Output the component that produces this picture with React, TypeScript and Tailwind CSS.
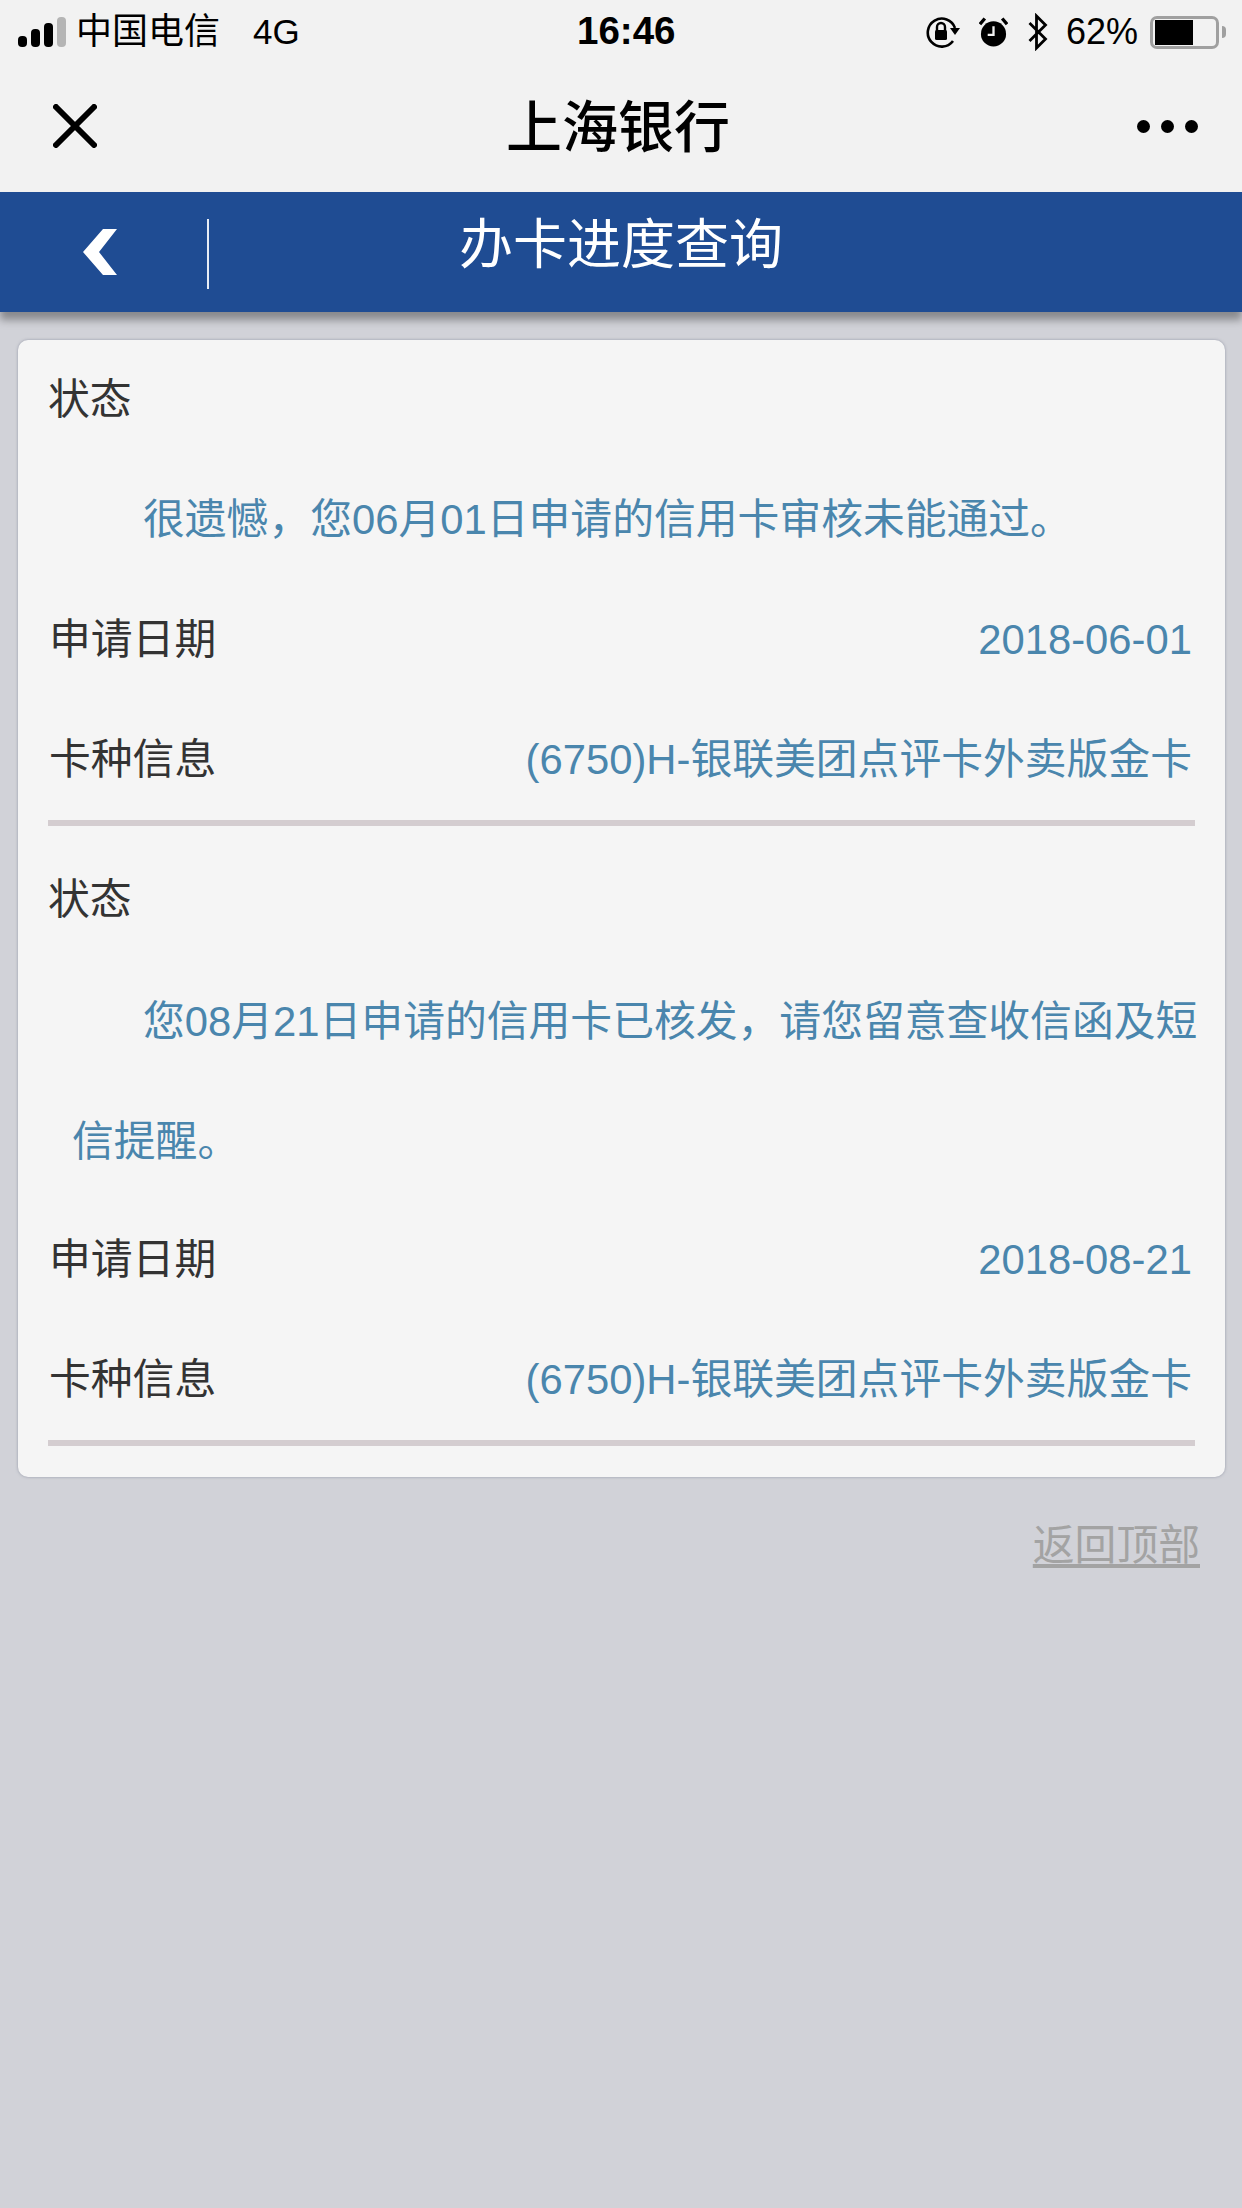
const cjk = { fontFamily: '"Liberation Sans", "Noto Sans CJK SC", sans-serif' };

function Row({ label, value }: { label: string; value: string }) {
  return (
    <div className="flex h-[120px] items-center justify-between pl-[31px] pr-[33px]">
      <span className="text-[#333333]">{label}</span>
      <span className="text-[#4a86ad]">{value}</span>
    </div>
  );
}

function Section({ lines, date }: { lines: string[]; date: string }) {
  return (
    <div>
      <div className="flex h-[120px] items-center pl-[30px] text-[#333333]">状态</div>
      <div className="text-[#4a86ad]">
        {lines.map((l, i) => (
          <div
            key={i}
            className={`flex h-[120px] items-center whitespace-nowrap ${i === 0 ? "pl-[125px]" : "pl-[54px]"} ${lines.length > 1 ? "pt-[4px]" : ""}`}
          >
            {l}
          </div>
        ))}
      </div>
      <Row label="申请日期" value={date} />
      <Row label="卡种信息" value="(6750)H-银联美团点评卡外卖版金卡" />
      <div className="mx-[30px] h-[6px] bg-[#d4cdd0]" />
    </div>
  );
}

export default function App() {
  return (
    <div className="flex h-[2208px] w-[1242px] flex-col overflow-hidden bg-[#d1d2d8]" style={cjk}>
      <div className="h-[192px] bg-[#f2f2f2] text-black">
        <div className="relative flex h-[64px] items-center justify-between pl-[18px] pr-[16px]">
          <div className="flex items-center">
            <svg width="48" height="30" viewBox="0 0 48 30" className="mr-[10px]">
              <rect x="0" y="19" width="9" height="11" rx="4" fill="#000" />
              <rect x="13" y="12" width="9" height="18" rx="4" fill="#000" />
              <rect x="26" y="6" width="9" height="24" rx="4" fill="#000" />
              <rect x="39" y="0" width="9" height="30" rx="4" fill="#b5b5b5" />
            </svg>
            <span className="text-[36px]">中国电信</span>
            <span className="ml-[33px] text-[35px]">4G</span>
          </div>
          <span className="absolute left-[577px] top-[6px] text-[38.5px] leading-[50px] font-bold">16:46</span>
          <div className="flex items-center">
            <svg width="34" height="32" viewBox="0 0 34 32" className="mr-[19px]">
              <path d="M27 25A14 14 0 1 1 29 12" fill="none" stroke="#000" strokeWidth="2.6" />
              <path d="M24 12 L34 12 L29 19 Z" fill="#000" />
              <rect x="9" y="14" width="12" height="10" rx="1.5" fill="#000" />
              <path d="M11 15V11a4 4 0 0 1 8 0v4" fill="none" stroke="#000" strokeWidth="2.4" />
            </svg>
            <svg width="29" height="32" viewBox="0 0 30 32" className="mr-[19px]">
              <circle cx="15" cy="18" r="13" fill="#000" />
              <path d="M15 10V19H9" fill="none" stroke="#f2f2f2" strokeWidth="2.4" />
              <path d="M1 8L6 2M29 8L24 2" stroke="#000" strokeWidth="3.4" />
            </svg>
            <svg width="21" height="38" viewBox="0 0 20 38" className="mr-[18px]">
              <path d="M2 10L18 26L9 35V3L18 12L2 28" fill="none" stroke="#000" strokeWidth="2.8" />
            </svg>
            <span className="text-[36px]">62%</span>
            <div className="ml-[12px] flex h-[33px] w-[69px] items-center rounded-[7px] border-[3px] border-[#a0a0a0] pl-[2px]">
              <div className="h-[25px] w-[38px] bg-black" />
            </div>
            <div className="ml-[3px] h-[12px] w-[4px] rounded-r-full bg-[#a0a0a0]" />
          </div>
        </div>
        <div className="relative flex h-[128px] items-center justify-center">
          <svg width="44" height="44" viewBox="0 0 44 44" className="absolute left-[53px] top-[40px]">
            <path d="M3 3L41 41M41 3L3 41" stroke="#000" strokeWidth="6" strokeLinecap="round" />
          </svg>
          <span className="mr-[6px] text-[56px] font-medium leading-none">上海银行</span>
          <div className="absolute left-[1137px] top-[56px] flex gap-[11px]">
            <div className="h-[13px] w-[13px] rounded-full bg-black" />
            <div className="h-[13px] w-[13px] rounded-full bg-black" />
            <div className="h-[13px] w-[13px] rounded-full bg-black" />
          </div>
        </div>
      </div>
      <div className="relative flex h-[120px] items-center justify-center bg-[#1f4c93] shadow-[0_8px_8px_rgba(0,0,0,0.35)]">
        <svg width="36" height="48" viewBox="0 0 36 48" className="absolute left-[82px] top-[36px]">
          <path d="M35 1H21L1 24L21 47H35L17 24Z" fill="#ffffff" />
        </svg>
        <div className="absolute left-[207px] top-[27px] h-[70px] w-[2px] bg-[#e8edf5]" />
        <span className="pb-[14px] text-[54px] font-normal leading-none text-white">办卡进度查询</span>
      </div>
      <div className="mx-[18px] mt-[28px] h-[1137px] w-[1207px] rounded-[10px] bg-[#f5f5f5] text-[41.8px] shadow-[0_0_3px_rgba(120,125,145,0.7)]">
        <Section lines={["很遗憾，您06月01日申请的信用卡审核未能通过。"]} date="2018-06-01" />
        <div className="h-[14px]" />
        <Section lines={["您08月21日申请的信用卡已核发，请您留意查收信函及短", "信提醒。"]} date="2018-08-21" />
      </div>
      <div className="flex justify-end pr-[42px] pt-[42px] text-[41.8px] leading-[54px] text-[#a3a3a3]">
        <span className="underline underline-offset-[4px]">返回顶部</span>
      </div>
    </div>
  );
}
